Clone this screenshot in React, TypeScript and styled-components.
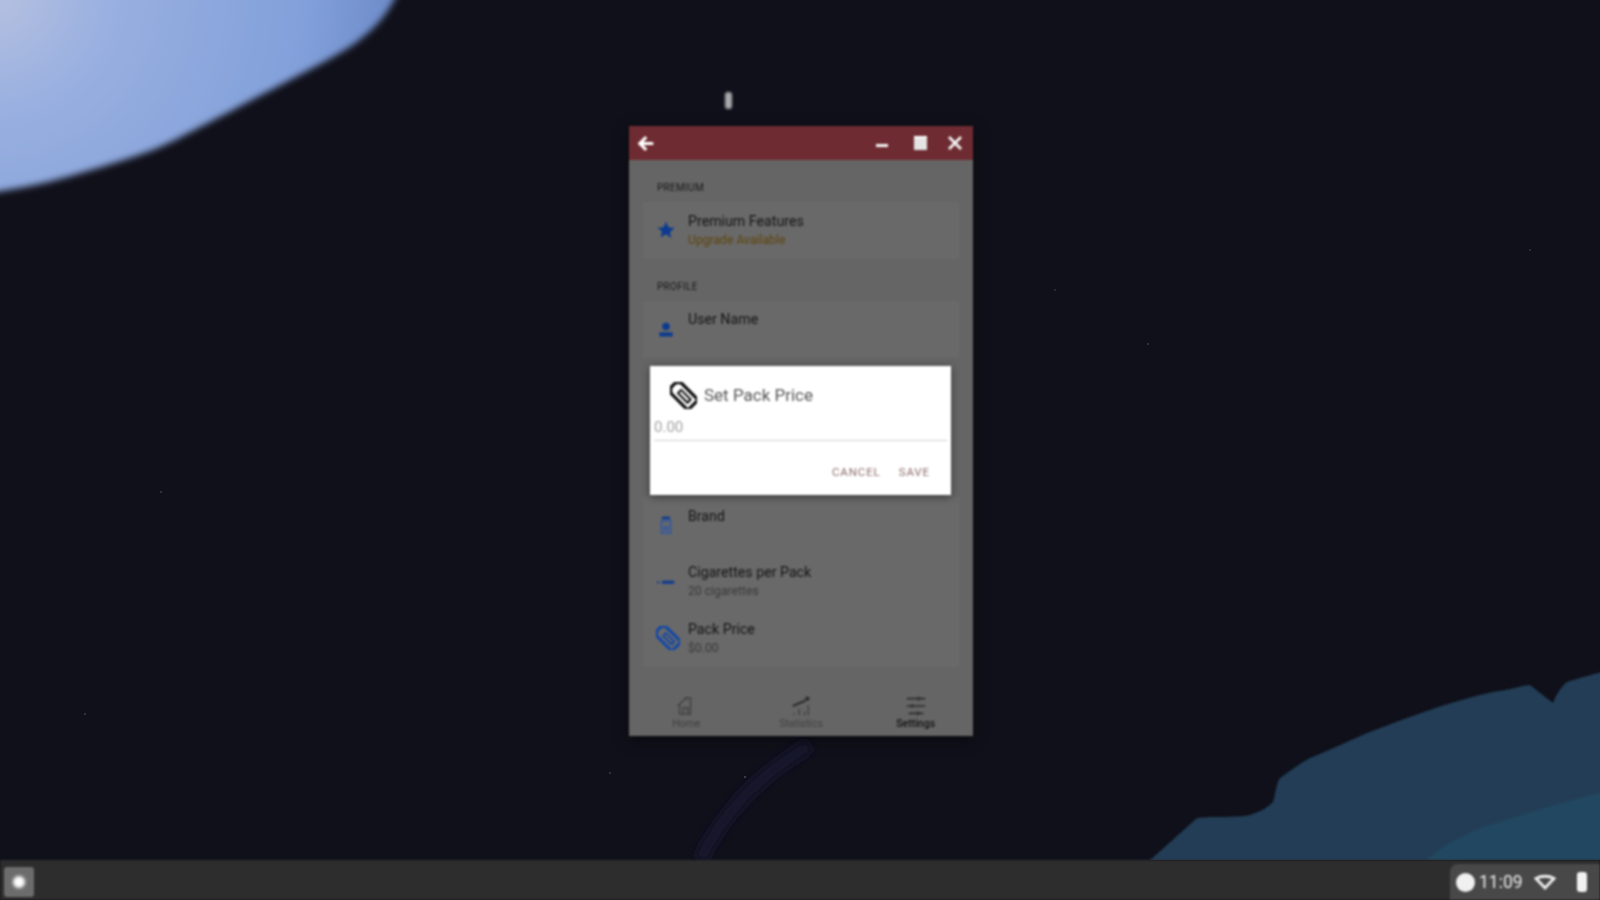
import styled, { createGlobalStyle } from "styled-components";

const GlobalStyle = createGlobalStyle`
  html, body {
    margin: 0;
    height: 100%;
    overflow: hidden;
    background: #10101a;
    font-family: Roboto, "Liberation Sans", sans-serif;
  }
`;

const BlueIcon = ({ children }: { children: React.ReactNode }) => (
  <RowIcon width="20" height="20" viewBox="0 0 24 24" fill="#0b3a90">
    {children}
  </RowIcon>
);

const TagPath = ({ stroke }: { stroke: string }) => (
  <g transform="rotate(45 12 12)" fill="none" stroke={stroke} strokeLinejoin="round">
    <path d="M-1 9l3.500-3.500H24v13H2.500L-1 15z" strokeWidth="2.800" />
    <path d="M7 10h12v4H7z" strokeWidth="1.800" />
  </g>
);

const Wallpaper = () => (
  <WallpaperArt viewBox="0 0 1600 860" preserveAspectRatio="none">
    <defs>
      <radialGradient id="moon" gradientUnits="userSpaceOnUse" cx="-10" cy="-10" r="420">
        <stop offset="0" stopColor="#b7c1e0" />
        <stop offset="0.3" stopColor="#98afe0" />
        <stop offset="0.75" stopColor="#82a0da" />
        <stop offset="1" stopColor="#6a88c6" />
      </radialGradient>
      <filter id="soft" x="-10%" y="-10%" width="120%" height="120%">
        <feGaussianBlur stdDeviation="3.500" />
      </filter>
      <filter id="faint">
        <feGaussianBlur stdDeviation="4" />
      </filter>
      <filter id="edge">
        <feGaussianBlur stdDeviation="0.800" />
      </filter>
    </defs>
    <path
      d="M-20 -20H403C392 8 382 22 362 38C345 52 320 64 267 92C240 106 222 116 200 127C170 143 155 150 133 157C105 166 85 172 67 177C45 183 20 189 -20 194Z"
      fill="url(#moon)"
      filter="url(#soft)"
    />
    <g filter="url(#edge)">
      <path
        d="M1148 862L1187 827L1197 818C1215 816 1235 818 1250 815C1262 811 1268 807 1273 802C1276 792 1276 784 1280 778C1292 770 1300 763 1310 758C1335 748 1360 735 1383 727C1420 713 1455 700 1493 692C1510 690 1520 686 1530 685L1553 703C1556 695 1560 688 1567 682C1580 678 1590 675 1602 672V862Z"
        fill="#213c54"
      />
      <path d="M1423 862C1450 840 1470 832 1483 827C1520 815 1560 803 1602 792V862Z" fill="#234660" />
    </g>
    <path d="M700 860C725 810 760 775 810 745" fill="none" stroke="#15162e" strokeWidth="14" filter="url(#faint)" />
    <circle cx="745" cy="777" r="1" fill="#4a4a58" />
    <circle cx="161" cy="492" r="1" fill="#3c3c48" />
    <circle cx="85" cy="714" r="1" fill="#3c3c48" />
    <circle cx="610" cy="773" r="1" fill="#3c3c48" />
    <circle cx="1148" cy="344" r="1" fill="#3c3c48" />
    <circle cx="1055" cy="290" r="1" fill="#33333f" />
    <circle cx="1530" cy="250" r="1" fill="#33333f" />
  </WallpaperArt>
);

export default function App() {
  return (
    <Desktop>
      <GlobalStyle />
      <Wallpaper />
      <Cursor />
      <AppWindow>
        <TitleBar>
          <svg width="17" height="17" viewBox="0 0 24 24" fill="none" stroke="#fff" strokeWidth="4.400">
            <path d="M23 12H4M13 3l-9 9 9 9" />
          </svg>
          <WindowButtons>
            <MinimizeGlyph />
            <MaximizeGlyph />
            <svg width="16" height="16" viewBox="0 0 16 16" stroke="#f6f6f6" strokeWidth="2.800">
              <path d="M2 2l12 12M14 2L2 14" />
            </svg>
          </WindowButtons>
        </TitleBar>

        <Body>
          <Content>
            <SectionLabel>PREMIUM</SectionLabel>
            <Card>
              <Row>
                <BlueIcon>
                  <path d="M12 2l3 6.800 7.300.7-5.500 4.900 1.600 7.200L12 17l-6.400 3.600 1.600-7.200L1.700 9.500 9 8.800z" />
                </BlueIcon>
                <RowText>
                  <RowTitle>Premium Features</RowTitle>
                  <RowSub $accent>Upgrade Available</RowSub>
                </RowText>
              </Row>
            </Card>

            <SectionLabel>PROFILE</SectionLabel>
            <Card>
              <Row>
                <BlueIcon>
                  <circle cx="12" cy="9" r="4.500" />
                  <path d="M4 16h16v5H4z" />
                </BlueIcon>
                <RowText>
                  <RowTitle>User Name</RowTitle>
                  <RowSub />
                </RowText>
              </Row>
            </Card>

            <Card $offset={140}>
              <Row>
                <BlueIcon>
                  <path d="M7 2h10v3H7z" />
                  <path
                    d="M6.500 7h11v15h-11zM10 14h4v4h-4z"
                    fill="none"
                    stroke="#2c57a4"
                    strokeWidth="1.800"
                  />
                </BlueIcon>
                <RowText>
                  <RowTitle>Brand</RowTitle>
                  <RowSub />
                </RowText>
              </Row>
              <Row>
                <BlueIcon>
                  <path d="M1 11.500h3v2H1zM7 10.500h15v3.500H7z" />
                </BlueIcon>
                <RowText>
                  <RowTitle>Cigarettes per Pack</RowTitle>
                  <RowSub>20 cigarettes</RowSub>
                </RowText>
              </Row>
              <Row>
                <RowIcon width="24" height="24" viewBox="0 0 24 24">
                  <TagPath stroke="#0d46ad" />
                </RowIcon>
                <PriceText>
                  <RowTitle>Pack Price</RowTitle>
                  <RowSub>$0.00</RowSub>
                </PriceText>
              </Row>
            </Card>
          </Content>

          <BottomNav>
            <NavItem>
              <svg width="22" height="22" viewBox="0 0 24 24" fill="none" stroke="#a4a4a4" strokeWidth="1.800">
                <path d="M4 11l8-8 1 1v-1h4v18H5V11zM9 21v-7h5v7" />
              </svg>
              <NavLabel>Home</NavLabel>
            </NavItem>
            <NavItem>
              <svg width="22" height="22" viewBox="0 0 24 24" fill="none" stroke="#a4a4a4" strokeWidth="1.800">
                <path d="M3 12l7-3 7-3" strokeWidth="2.400" stroke="#666" />
                <circle cx="19" cy="4" r="1.500" fill="#666" stroke="#666" />
                <path d="M4 22v-2M10 22v-7M16 22v-4M20 22V11" />
              </svg>
              <NavLabel>Statistics</NavLabel>
            </NavItem>
            <NavItem>
              <svg width="22" height="22" viewBox="0 0 24 24" fill="none" stroke="#666" strokeWidth="1.800">
                <path d="M2 4h20M2 12h20M4 20h16" />
                <path d="M15 2v4M8 10v4M14 18v4" stroke="#84585e" />
              </svg>
              <NavLabel $active>Settings</NavLabel>
            </NavItem>
          </BottomNav>

          <Scrim />
          <Dialog>
            <DialogHead>
              <svg width="27" height="27" viewBox="0 0 24 24">
                <TagPath stroke="#0b0b0b" />
              </svg>
              <DialogTitle>Set Pack Price</DialogTitle>
            </DialogHead>
            <PriceInput>0.00</PriceInput>
            <DialogActions>
              <ActionButton>CANCEL</ActionButton>
              <ActionButton>SAVE</ActionButton>
            </DialogActions>
          </Dialog>
        </Body>
      </AppWindow>

      <Taskbar>
        <Launcher>
          <LauncherDot />
        </Launcher>
        <Tray>
          <ClockBadge />
          <TrayTime>11:09</TrayTime>
          <svg width="22" height="16" viewBox="0 0 22 16" fill="none" stroke="#eee" strokeWidth="2.800">
            <path d="M2 4.500C7 1.500 15 1.500 20 4.500L11 14z" />
          </svg>
          <Battery />
        </Tray>
      </Taskbar>
    </Desktop>
  );
}

const Desktop = styled.div`
  position: relative;
  width: 1600px;
  height: 900px;
  overflow: hidden;
  display: flex;
  flex-direction: column;
  justify-content: flex-end;
  background: #10101a;
`;

const WallpaperArt = styled.svg`
  position: absolute;
  top: 0;
  left: 0;
  width: 1600px;
  height: 860px;
`;

const Cursor = styled.div`
  position: absolute;
  left: 725px;
  top: 92px;
  width: 7px;
  height: 17px;
  border-radius: 3px;
  background: #a9a9ad;
  filter: blur(1.400px);
`;

const AppWindow = styled.div`
  position: absolute;
  left: 629px;
  top: 126px;
  width: 344px;
  height: 610px;
  display: flex;
  flex-direction: column;
  overflow: hidden;
  background: #666;
  box-shadow: 0 3px 12px rgba(0, 0, 0, 0.5);
  filter: blur(0.8px);
`;

const TitleBar = styled.div`
  height: 34px;
  flex: none;
  display: flex;
  align-items: center;
  justify-content: space-between;
  padding: 0 10px 0 8px;
  background: #6e2c32;
`;

const WindowButtons = styled.div`
  display: flex;
  align-items: center;
  gap: 20px;
`;

const MinimizeGlyph = styled.div`
  width: 12px;
  height: 3px;
  margin: 4px 6px 0 0;
  background: #f6f6f6;
`;

const MaximizeGlyph = styled.div`
  width: 13px;
  height: 12px;
  background: #e4e4e4;
  border-top: 2px solid #fff;
`;

const Body = styled.div`
  position: relative;
  flex: 1;
  min-height: 0;
  display: flex;
  flex-direction: column;
`;

const Content = styled.div`
  flex: 1;
  min-height: 0;
  display: flex;
  flex-direction: column;
  padding: 22px 14px 0;
  background: #f0f0f0;
`;

const SectionLabel = styled.div`
  height: 12px;
  padding-left: 14px;
  font-size: 10px;
  line-height: 12px;
  letter-spacing: 0.3px;
  color: #3c3c3c;
  & ~ & {
    margin-top: 22px;
  }
`;

const Card = styled.div<{ $offset?: number }>`
  display: flex;
  flex-direction: column;
  margin-top: ${(p) => p.$offset ?? 8}px;
  background: #fafafa;
`;

const Row = styled.div`
  height: 56.500px;
  display: flex;
  align-items: center;
  gap: 12px;
  padding-left: 13px;
`;

const RowIcon = styled.svg`
  position: relative;
  z-index: 2;
`;

const RowText = styled.div`
  display: flex;
  flex-direction: column;
`;

const PriceText = styled(RowText)`
  margin-left: -4px;
`;

const RowTitle = styled.div`
  font-size: 14.200px;
  line-height: 18px;
  color: #333;
`;

const RowSub = styled.div<{ $accent?: boolean }>`
  height: 17px;
  margin-top: 2px;
  font-size: 12.200px;
  line-height: 17px;
  color: ${(p) => (p.$accent ? "#e0a11b" : "#8a8a8a")};
`;

const BottomNav = styled.div`
  height: 54px;
  flex: none;
  display: grid;
  grid-template-columns: repeat(3, 1fr);
  background: #f0f0f0;
`;

const NavItem = styled.div`
  display: flex;
  flex-direction: column;
  align-items: center;
  padding-top: 13px;
  gap: 1px;
`;

const NavLabel = styled.div<{ $active?: boolean }>`
  font-size: 10.500px;
  line-height: 12px;
  color: ${(p) => (p.$active ? "#2c2c2c" : "#9a9a9a")};
  font-weight: ${(p) => (p.$active ? 500 : 400)};
`;

const Scrim = styled.div`
  position: absolute;
  inset: 0;
  z-index: 1;
  background: rgba(0, 0, 0, 0.58);
`;

const Dialog = styled.div`
  position: absolute;
  left: 21px;
  top: 206px;
  z-index: 3;
  width: 301px;
  height: 129px;
  display: flex;
  flex-direction: column;
  background: #fff;
  box-shadow: 0 2px 8px rgba(0, 0, 0, 0.45);
`;

const DialogHead = styled.div`
  display: flex;
  align-items: center;
  gap: 7px;
  height: 28px;
  padding: 15px 0 0 20px;
`;

const DialogTitle = styled.div`
  font-size: 17px;
  color: #555;
`;

const PriceInput = styled.div`
  margin: 8px 4px 0;
  height: 23px;
  font-size: 15px;
  line-height: 20px;
  color: #a2a2a2;
  border-bottom: 1.500px solid #cfcfcf;
`;

const DialogActions = styled.div`
  display: flex;
  justify-content: flex-end;
  gap: 18px;
  padding: 25px 21px 0 0;
`;

const ActionButton = styled.div`
  font-size: 11.500px;
  line-height: 12px;
  letter-spacing: 0.9px;
  color: #8d6a6e;
`;

const Taskbar = styled.div`
  position: relative;
  height: 40px;
  flex: none;
  display: flex;
  align-items: center;
  justify-content: space-between;
  background: #2d2d2e;
  filter: blur(0.8px);
`;

const Launcher = styled.div`
  width: 30px;
  height: 30px;
  margin: 3px 0 0 4px;
  display: flex;
  align-items: center;
  justify-content: center;
  border-radius: 3px;
  background: #6c6c6c;
`;

const LauncherDot = styled.div`
  width: 12px;
  height: 12px;
  border-radius: 50%;
  background: #fff;
  filter: blur(1.500px);
`;

const Tray = styled.div`
  height: 36px;
  margin-top: 4px;
  display: flex;
  align-items: center;
  padding: 0 13px 0 6px;
  gap: 6px;
  border-radius: 8px 0 0 0;
  background: #484848;
`;

const ClockBadge = styled.div`
  width: 19px;
  height: 19px;
  margin-right: -2px;
  border-radius: 50%;
  background: #f0f0f0;
`;

const TrayTime = styled.div`
  width: 49px;
  font-size: 17.500px;
  color: #ececec;
`;

const Battery = styled.div`
  width: 10px;
  height: 20px;
  margin-left: 15px;
  border-radius: 3px;
  background: #f2f2f2;
`;
